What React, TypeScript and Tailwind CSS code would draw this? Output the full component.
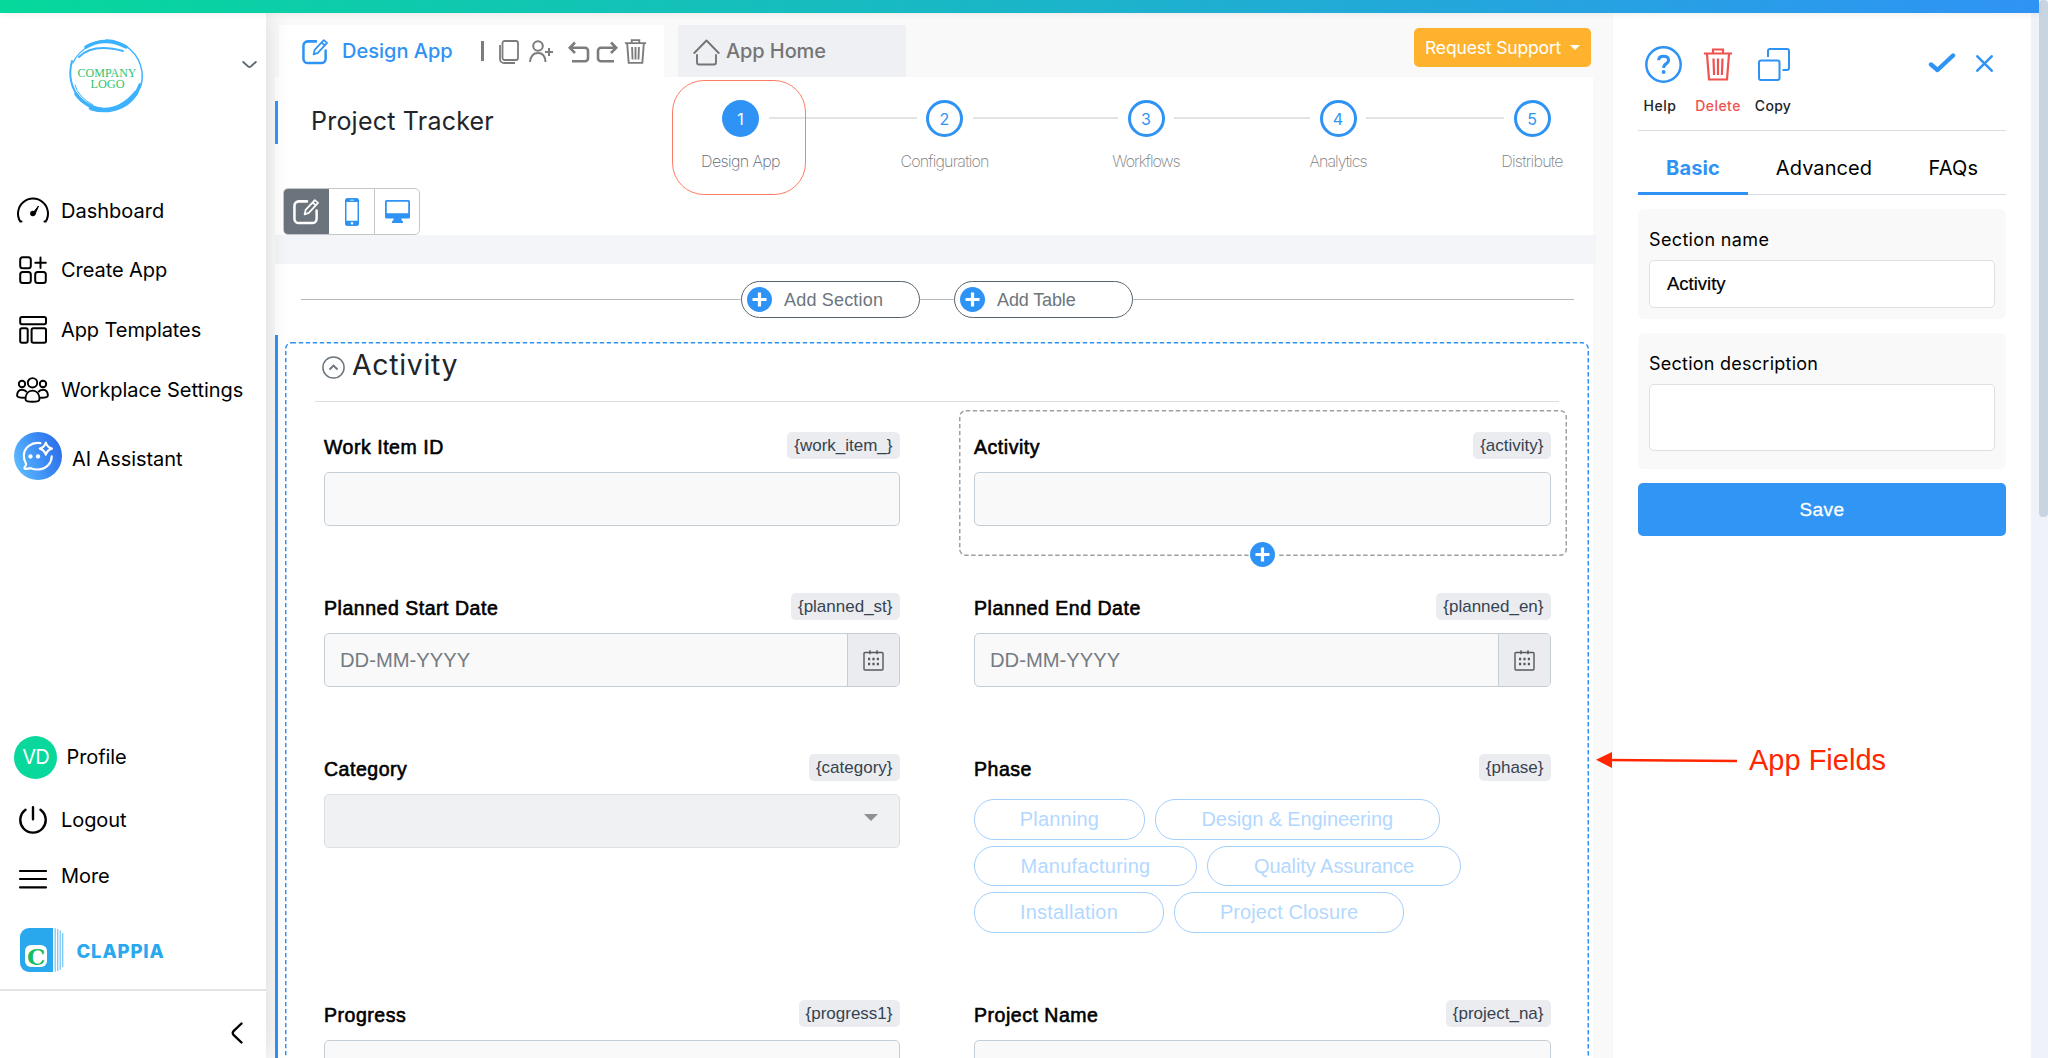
import type { ReactNode } from "react";

const INTER = "font-['Inter',sans-serif]";
const HELV = "font-['Liberation_Sans',sans-serif]";

function Pencil({ className }: { className: string }) {
  return (
    <svg className={className} viewBox="0 0 28 28" fill="none" stroke="currentColor" strokeLinecap="round" strokeLinejoin="round">
      <path d="M14.5 3.5H6a4.5 4.5 0 0 0-4.5 4.5v13.500a4.500 4.500 0 0 0 4.500 4.500h14a4.500 4.500 0 0 0 4.500-4.500V13" strokeWidth="2.6" />
      <path d="M12 17l1.100-4.600L22.600 2.200l3.400 2.900-9.600 10.300zM20.300 4.700l3.400 2.900" strokeWidth="1.8" />
    </svg>
  );
}

function Trash({ className, sw }: { className: string; sw: number }) {
  return (
    <svg className={className} viewBox="0 0 30 33" fill="none" stroke="currentColor" strokeWidth={sw}>
      <path d="M1 5.500h28M10 5V1.500h10V5M4 6l2 25.500h18L26 6M10.500 10.500l.6 16.500M15 10.500v16.500M19.500 10.500l-.6 16.500" />
    </svg>
  );
}

function PlusDot() {
  return (
    <svg className="size-[25px] shrink-0" viewBox="0 0 25 25">
      <circle cx="12.500" cy="12.500" r="12.500" fill="#2f93f5" />
      <path d="M12.500 5.500v14M5.500 12.500h14" stroke="#fff" strokeWidth="3.200" />
    </svg>
  );
}

function DashedFrame({ className, w, h }: { className: string; w: number; h: number }) {
  return (
    <svg className={"pointer-events-none absolute " + className} width={w} height={h} fill="none" stroke="currentColor">
      <rect x="0.750" y="0.750" width={w - 1.5} height={h - 1.5} rx="6" strokeWidth="1.500" strokeDasharray="4.400 2.600" />
    </svg>
  );
}

function NavItem({ icon, label, className }: { icon: ReactNode; label: string; className: string }) {
  return (
    <div className="flex h-[59.75px] items-center">
      <div className="flex w-[61px] justify-center pl-[4px]">{icon}</div>
      <span className={className}>{label}</span>
    </div>
  );
}

function Sidebar() {
  return (
    <aside className={"relative z-10 flex w-[266px] shrink-0 flex-col bg-white text-[20px] leading-[30px] text-black shadow-[0_0_24px_rgba(0,0,0,0.13)] " + INTER}>
      <div className="flex h-[167.500px] shrink-0 items-start justify-between pt-[26px] pr-[9px] pl-[69px]">
        <svg className="h-[75px] w-[74px] overflow-visible" viewBox="0 0 74 75">
          <g fill="none" stroke="#3db2ff" strokeLinecap="round">
            <path d="M37 1A36.500 36.500 0 0 1 73 33" strokeWidth="1.500" />
            <path d="M17 8Q36-3 57 8" strokeWidth="3.500" />
            <path d="M10 18Q24 4 54 12" strokeWidth="2" />
            <path d="M4 24Q8 14 20 7" strokeWidth="1.200" />
            <path d="M3 22Q-3 44 12 61" strokeWidth="2" />
            <path d="M7 55Q17 69 36 71Q62 71 71 46" strokeWidth="3.500" />
            <path d="M22 69Q48 77 67 54" strokeWidth="4.500" />
            <path d="M6 46Q9 58 24 66" strokeWidth="1" />
            <path d="M73 34Q74 42 71 48" strokeWidth="1.500" />
          </g>
          <text x="8.500" y="37.500" fontFamily="Liberation Serif, serif" fontSize="12.500" textLength="59" lengthAdjust="spacingAndGlyphs" fill="#2cc56f">COMPANY</text>
          <text x="21.500" y="48.800" fontFamily="Liberation Serif, serif" fontSize="12.500" textLength="34" lengthAdjust="spacingAndGlyphs" fill="#2cc56f">LOGO</text>
        </svg>
        <svg className="mt-[21px] h-[10px] w-[15px]" viewBox="0 0 15 10" fill="none" stroke="#5f6b76" strokeWidth="1.900" strokeLinecap="round">
          <path d="M1.200 2l5 4.500q1.300.9 2.600 0l5-4.500" />
        </svg>
      </div>

      <nav>
        <NavItem
          label="Dashboard"
          className="mt-[1px] tracking-[0px]"
          icon={
            <svg className="h-[26px] w-[34px]" viewBox="0 0 34 26" fill="none" stroke="#000" strokeWidth="2" strokeLinecap="round">
              <path d="M5.500 24.500H4.300A15 15 0 1 1 29.700 24.500H28.500" />
              <path d="M17.500 15.200l5-6.200-3.400 8z" fill="#000" strokeWidth="1" />
              <circle cx="16.800" cy="16.500" r="2.700" fill="#000" stroke="none" />
            </svg>
          }
        />
        <NavItem
          label="Create App"
          className="tracking-[-0.06px]"
          icon={
            <svg className="size-[28px]" viewBox="0 0 28 28" fill="none" stroke="#000" strokeWidth="2" strokeLinecap="round">
              <rect x="1.200" y="1.200" width="10.600" height="11" rx="2.500" />
              <rect x="1.200" y="16" width="10.600" height="11" rx="2.500" />
              <rect x="16.200" y="16" width="10.600" height="11" rx="2.500" />
              <path d="M21.500 1.500v10.500M16.300 6.700h10.500" />
            </svg>
          }
        />
        <NavItem
          label="App Templates"
          className="tracking-[-0.09px]"
          icon={
            <svg className="size-[28px]" viewBox="0 0 28 28" fill="none" stroke="#000" strokeWidth="2">
              <rect x="1.200" y="1" width="25.800" height="7.300" rx="1.800" />
              <rect x="1.200" y="12.200" width="7.500" height="14.600" rx="1.800" />
              <rect x="12.600" y="12.200" width="14.400" height="14.600" rx="1.800" />
            </svg>
          }
        />
        <NavItem
          label="Workplace Settings"
          className="tracking-[-0.05px]"
          icon={
            <svg className="h-[26px] w-[33px]" viewBox="0 0 33 26" fill="none" stroke="#000" strokeWidth="1.900" strokeLinejoin="round">
              <circle cx="16.500" cy="5.800" r="4.700" />
              <circle cx="6" cy="7" r="3.200" />
              <circle cx="27" cy="7" r="3.200" />
              <path d="M16.500 24.800c-5 0-7-1-7-2.600 0-5 2.500-8.600 7-8.600s7 3.600 7 8.600c0 1.600-2 2.600-7 2.600z" />
              <path d="M9.300 20.600c-5 .3-8.200-.2-8.200-1.800 0-3.800 1.700-6 4.700-6 2 0 3.800.6 5 2.300M23.700 20.600c5 .3 8.200-.2 8.200-1.800 0-3.800-1.700-6-4.700-6-2 0-3.800.6-5 2.300" />
            </svg>
          }
        />
      </nav>
      <div className="mt-[6px] flex h-[60px] shrink-0 items-center pl-[14px]">
        <svg className="size-[48px]" viewBox="0 0 49 49" fill="none">
          <defs>
            <linearGradient id="ai" x1="0" y1="0.700" x2="1" y2="0.300">
              <stop offset="0" stopColor="#5cbcff" />
              <stop offset="0.550" stopColor="#3d8df5" />
              <stop offset="1" stopColor="#2a6eea" />
            </linearGradient>
          </defs>
          <circle cx="24.500" cy="24.500" r="24.500" fill="url(#ai)" />
          <g stroke="#fff" strokeWidth="2.200" strokeLinejoin="round" strokeLinecap="round">
            <path d="M27 11.400C18 10 10 15.500 10 24.500c0 3.500 1.400 6 2.200 7.700.8 2-1.600 3.300-1.600 4.600 0 1.500 3.400.8 6.400.1 3 1.200 6 1.600 9 1.200 7.500-.9 12.500-6.600 12.500-13.300" />
            <path d="M32.500 10.800q1.400 5 6.200 6.200-4.800 1.400-6.200 6.200-1.400-4.800-6.200-6.200 4.800-1.200 6.200-6.200z" />
          </g>
          <circle cx="16.800" cy="25" r="2.200" fill="#fff" />
          <circle cx="24.500" cy="25" r="2.200" fill="#fff" />
        </svg>
        <span className="mt-[7px] ml-[10px] tracking-[-0.08px]">AI Assistant</span>
      </div>

      <div className="mt-auto flex h-[60px] shrink-0 items-center pl-[14px]">
        <div className="flex size-[43px] items-center justify-center rounded-full bg-[#08d89c] text-[20px] tracking-[-0.8px] text-white">VD</div>
        <span className="ml-[9.500px] tracking-[-0.09px]">Profile</span>
      </div>
      <div className="flex h-[62px] shrink-0 items-center pt-[3px] pl-[19px]">
        <svg className="size-[28px]" viewBox="0 0 28 28" fill="none" stroke="#000" strokeWidth="2.400" strokeLinecap="round">
          <path d="M6.500 3.700A12.700 12.700 0 1 0 21.500 3.700M14 1.300v12" />
        </svg>
        <span className="ml-[14px] tracking-[-0.08px]">Logout</span>
      </div>
      <div className="flex h-[54px] shrink-0 items-center pl-[19px]">
        <svg className="mt-[5px] h-[20px] w-[28px]" viewBox="0 0 28 20" fill="none" stroke="#000" strokeWidth="2.200" strokeLinecap="round">
          <path d="M1 2h26M1 10h26M1 18.300h26" />
        </svg>
        <span className="ml-[14px] tracking-[-0.09px]">More</span>
      </div>
      <div className="flex h-[86px] shrink-0 items-center pt-[7px] pl-[20px]">
        <svg className="h-[44px] w-[44px]" viewBox="0 0 44 44" fill="none">
          <path d="M9 0H33V44H9a9 9 0 0 1-9-9V9A9 9 0 0 1 9 0z" fill="#2aa8ee" />
          <path d="M35.200.2v43.600M37.700 1v42M40.200 2.200v39.600M42.700 5v34" stroke="#7cc8f5" strokeWidth="1.300" />
          <rect x="5" y="17" width="22" height="22" rx="6" fill="#fff" />
          <text x="7" y="36.500" fontFamily="DejaVu Serif, serif" fontWeight="700" fontSize="23" fill="#17bd63">C</text>
        </svg>
        <span className="mt-[2px] ml-[12.500px] text-[18.500px] font-extrabold tracking-[0.85px] text-[#2aa8ee]">CLAPPIA</span>
      </div>
      <div className="flex h-[69px] shrink-0 items-center justify-end border-t-2 border-[#e4e4e4] pt-[17px] pr-[23px]">
        <svg className="h-[22px] w-[12px]" viewBox="0 0 12 22" fill="none" stroke="#000" strokeWidth="2.400" strokeLinecap="round" strokeLinejoin="round">
          <path d="M10.500 1.500L2.500 9.200q-1.500 1.800 0 3.600l8 7.700" />
        </svg>
      </div>
    </aside>
  );
}

function TabsBar() {
  return (
    <div className={"flex h-[64px] shrink-0 items-end pl-[4px] text-[20px] leading-[30px] font-medium " + INTER}>
      <div className="flex h-[52px] w-[385px] items-center bg-white pl-[23px] text-[#7c7c7c]">
        <Pencil className="size-[27px] text-[#2f93f5]" />
        <span className="ml-[13px] w-[111px] text-[#2f93f5]">Design App</span>
        <span className="ml-[28px] h-[20px] w-[3px] bg-[#7c7c7c]" />
        <svg className="mt-[1px] ml-[15px] h-[24px] w-[20px]" viewBox="0 0 20 24" fill="none" stroke="currentColor" strokeWidth="1.800">
          <rect x="3.500" y="1" width="15.500" height="19" rx="2" />
          <path d="M1 5v14a4 4 0 0 0 4 4h11" />
        </svg>
        <svg className="ml-[10px] h-[23px] w-[25px]" viewBox="0 0 25 23" fill="none" stroke="currentColor" strokeWidth="2">
          <circle cx="9" cy="6" r="4.800" />
          <path d="M1 22q1-9 8-9t7.500 9M16 12h8M20 8v8" />
        </svg>
        <svg className="mt-[2px] ml-[14px] h-[22px] w-[22px]" viewBox="0 0 22 22" fill="none" stroke="currentColor" strokeWidth="2.600">
          <path d="M7 1.500L1.800 6.800 7 12M2 6.800h15a3 3 0 0 1 3 3v7.500a3 3 0 0 1-3 3H4" />
        </svg>
        <svg className="mt-[2px] ml-[6px] h-[22px] w-[22px]" viewBox="0 0 22 22" fill="none" stroke="currentColor" strokeWidth="2.600">
          <path d="M15 1.500l5.200 5.300L15 12M20 6.800H5a3 3 0 0 0-3 3v7.500a3 3 0 0 0 3 3h13" />
        </svg>
        <Trash className="ml-[6px] h-[25px] w-[23px]" sw={2.5} />
      </div>
      <div className="ml-[14px] flex h-[52px] w-[228px] items-center bg-[#eff0f3] pl-[15px] text-[#757575]">
        <svg className="mt-[3px] h-[27px] w-[27px]" viewBox="0 0 27 27" fill="none" stroke="currentColor" strokeWidth="1.900" strokeLinecap="round" strokeLinejoin="round">
          <path d="M1.300 14L13.500 1.500 25.700 14M4 16v7.500a2 2 0 0 0 2 2h15a2 2 0 0 0 2-2V16" />
        </svg>
        <span className="ml-[6px] tracking-[-0.1px]">App Home</span>
      </div>
      <div className="mt-[15px] mr-[22px] mb-auto ml-auto flex h-[39px] w-[177px] items-center rounded-[5px] bg-[#ffb22d] pl-[11px] text-[17.5px] font-normal tracking-[-0.15px] text-white">
        <span className="w-[145px]">Request Support</span>
        <span className="-mt-[1px] border-x-[5px] border-t-[5px] border-x-transparent border-t-white" />
      </div>
    </div>
  );
}

const STEPS = [
  { label: "Design App", gap: "w-[167px]", track: "tracking-[-0.63px]", tone: "text-[#5c6773]" },
  { label: "Configuration", gap: "w-[164.500px]", track: "tracking-[-0.81px]", tone: "text-[#7d7d7d]" },
  { label: "Workflows", gap: "w-[155px]", track: "tracking-[-1px]", tone: "text-[#7d7d7d]" },
  { label: "Analytics", gap: "w-[157px]", track: "tracking-[-0.97px]", tone: "text-[#7d7d7d]" },
  { label: "Distribute", gap: "", track: "tracking-[-0.74px]", tone: "text-[#7d7d7d]" },
];

function Header() {
  return (
    <div className={"mr-[20px] h-[158px] bg-white " + INTER}>
      <div className="flex h-[111px] pl-[36px]">
        <h1 className="w-[411px] pt-[26px] text-[25px] leading-[36px] tracking-[0.22px] text-[#212529]">Project Tracker</h1>
        <div className="relative flex pt-[23px]">
          {STEPS.map((s, i) => (
            <div key={s.label} className="flex">
              <div className="flex w-[37px] flex-col items-center">
                <div
                  className={
                    "flex size-[37px] items-center justify-center rounded-full text-[16px] " +
                    (i === 0 ? "bg-[#2f93f5] text-white" : "border-[3px] border-[#2f93f5] text-[#2f93f5]")
                  }
                >
                  {i + 1}
                </div>
                <span className={"mt-[12px] text-[16px] leading-[24px] font-extralight whitespace-nowrap " + s.track + " " + s.tone}>{s.label}</span>
              </div>
              {s.gap && (
                <div className={"px-[9.500px] pt-[17px] " + s.gap}>
                  <div className="h-[2px] bg-[#e4e4e4]" />
                </div>
              )}
            </div>
          ))}
          <div className="absolute top-[3px] -left-[50px] h-[115px] w-[134px] rounded-[32px] border border-[#ff7d68]" />
        </div>
      </div>
      <div className="ml-[8px] flex h-[47px] w-[137px] overflow-hidden rounded-[5px] border border-[#c4c7ca] text-[#2f93f5]">
        <div className="flex w-[45px] items-center justify-center bg-[#6b747d] text-white">
          <Pencil className="size-[27px]" />
        </div>
        <div className="flex w-[46px] items-center justify-center border-r border-[#c4c7ca]">
          <svg className="h-[28px] w-[14px]" viewBox="0 0 14 28">
            <path fill="currentColor" fillRule="evenodd" d="M2.500 0h9A2.500 2.500 0 0 1 14 2.500v23a2.500 2.500 0 0 1-2.500 2.500h-9A2.500 2.500 0 0 1 0 25.500v-23A2.500 2.500 0 0 1 2.500 0zM1.500 4v18.800h11V4zM5 1.700v.9h4v-.9zM7 24a1.300 1.300 0 1 0 .01 0z" />
          </svg>
        </div>
        <div className="flex w-[44px] items-center justify-center">
          <svg className="h-[23px] w-[25px]" viewBox="0 0 25 23">
            <path fill="currentColor" fillRule="evenodd" d="M1.500 0h22A1.500 1.500 0 0 1 25 1.500v15.500a1.500 1.500 0 0 1-1.500 1.500h-7.300q.2 2 1.800 3v1.500H7v-1.500q1.600-1 1.800-3H1.500A1.500 1.500 0 0 1 0 17V1.500A1.500 1.500 0 0 1 1.500 0zM1.800 1.800v11.400h21.400V1.800z" />
          </svg>
        </div>
      </div>
    </div>
  );
}

function AddButton({ label, className }: { label: string; className: string }) {
  return (
    <button className={"flex h-[37px] w-[179px] items-center rounded-[19px] border border-[#56636d] bg-white pl-[5px] text-[18px] text-[#6c757d] " + className}>
      <PlusDot />
      <span className="mt-[1px] ml-[12px]">{label}</span>
    </button>
  );
}

function FieldHead({ label, tag }: { label: string; tag: string }) {
  return (
    <div className="flex h-[27px] items-start justify-between">
      <span className="mt-[2px] text-[19.5px] leading-[27px] tracking-[0.53px] text-black [-webkit-text-stroke:0.6px_#000]">{label}</span>
      <span className="h-[27px] rounded-[5px] bg-[#ebecf0] pr-[7.500px] pl-[7px] text-[17px] leading-[28px] tracking-[0px] text-[#364350]">{tag}</span>
    </div>
  );
}

function TextField({ label, tag }: { label: string; tag: string }) {
  return (
    <div>
      <FieldHead label={label} tag={tag} />
      <div className="mt-[13px] h-[54px] rounded-[5px] border border-[#c5cdd5] bg-[#f9f9f9]" />
    </div>
  );
}

function DateField({ label, tag }: { label: string; tag: string }) {
  return (
    <div>
      <FieldHead label={label} tag={tag} />
      <div className="mt-[13px] flex h-[54px] overflow-hidden rounded-[5px] border border-[#c5cdd5] bg-[#f9f9f9]">
        <span className="flex-1 pl-[15px] text-[20.2px] leading-[52px] text-[#747c83]">DD-MM-YYYY</span>
        <div className="flex w-[52px] items-center justify-center border-l border-[#c5cdd5] bg-[#ebecf0]">
          <svg className="h-[21px] w-[21px]" viewBox="0 0 21 21" fill="none" stroke="#55585c" strokeWidth="1.400">
            <rect x="1" y="2.500" width="19" height="17.500" rx="1" />
            <path d="M7 .3v4M14 .3v4" />
            <path d="M5 9h2.200M9.400 9h2.200M13.800 9H16M5 14h2.200M9.400 14h2.200M13.800 14H16" strokeWidth="2.400" />
          </svg>
        </div>
      </div>
    </div>
  );
}

const PHASES = [
  { label: "Planning", cls: "w-[171px] tracking-[0.18px]" },
  { label: "Design & Engineering", cls: "w-[284.500px] mr-[100px] tracking-[-0.1px]" },
  { label: "Manufacturing", cls: "w-[223px] tracking-[0.25px]" },
  { label: "Quality Assurance", cls: "w-[254px] mr-[80px] tracking-[-0.07px]" },
  { label: "Installation", cls: "w-[190px] tracking-[0.2px]" },
  { label: "Project Closure", cls: "w-[230px] tracking-[0.1px]" },
];

function Canvas() {
  return (
    <div className={"mr-[20px] flex-1 bg-white " + HELV}>
      <div className="flex h-[71px] items-center pr-[19px] pl-[26px]">
        <div className="h-px flex-1 bg-[#b5b9bc]" />
        <AddButton label="Add Section" className="tracking-[0.19px]" />
        <div className="h-px w-[34px] bg-[#b5b9bc]" />
        <AddButton label="Add Table" className="tracking-[-0.13px]" />
        <div className="h-px w-[441px] bg-[#b5b9bc]" />
      </div>
      <div className="h-[730px] border-l-[3px] border-[#2f93f5] pt-[7px] pl-[7px]">
        <section className="relative h-[760px] pr-[30px] pl-[30px]">
          <DashedFrame className="top-0 left-0 text-[#2f93f5]" w={1304} h={760} />
          <div className="mr-[4px] flex h-[60px] items-start border-b border-[#dcdde0] pl-[7px]">
            <svg className="mt-[14px] size-[23px]" viewBox="0 0 23 23" fill="none" stroke="#6c757d">
              <circle cx="11.500" cy="11.500" r="10.600" strokeWidth="1.500" />
              <path d="M7.500 13.500l4-4 4 4" strokeWidth="1.900" />
            </svg>
            <h2 className={"ml-[7px] text-[28.5px] leading-[46px] tracking-[0.65px] text-[#212529] " + INTER}>Activity</h2>
          </div>
          <div className="grid grid-cols-[576px_577px] grid-rows-[161px_161px_246px_100px] gap-x-[74px] pt-[30px] pl-[9px]">
            <TextField label="Work Item ID" tag="{work_item_}" />
            <div className="relative">
              <TextField label="Activity" tag="{activity}" />
              <DashedFrame className="-top-[22px] -left-[15.500px] text-[#9d9fa1]" w={608} h={146} />
              <div className="absolute top-[110px] left-[274.500px] bg-white px-[1.500px]">
                <PlusDot />
              </div>
            </div>
            <DateField label="Planned Start Date" tag="{planned_st}" />
            <DateField label="Planned End Date" tag="{planned_en}" />
            <div>
              <FieldHead label="Category" tag="{category}" />
              <div className="mt-[13px] flex h-[54px] justify-end rounded-[5px] border border-[#dae0e4] bg-[#f0f1f3] pt-[19px] pr-[21px]">
                <span className="h-0 w-0 border-x-[7px] border-t-[7px] border-x-transparent border-t-[#8e9091]" />
              </div>
            </div>
            <div>
              <FieldHead label="Phase" tag="{phase}" />
              <div className="mt-[18px] flex flex-wrap gap-x-[10px] gap-y-[6px] text-[20px] text-[#b3d8ff]">
                {PHASES.map((p) => (
                  <span key={p.label} className={"h-[40.500px] rounded-[20px] border border-[#a3cffd] text-center leading-[39px] " + p.cls}>
                    {p.label}
                  </span>
                ))}
              </div>
            </div>
            <TextField label="Progress" tag="{progress1}" />
            <TextField label="Project Name" tag="{project_na}" />
          </div>
        </section>
      </div>
    </div>
  );
}

function Inspector() {
  return (
    <aside className={"flex w-[418px] shrink-0 flex-col bg-white px-[25px] text-black " + INTER}>
      <div className="flex h-[118px] items-start border-b border-[#dcdde0] text-[14px] leading-[20px] font-medium text-[#212529]">
        <div className="mt-[33px] flex w-[44px] flex-col items-center">
          <svg className="size-[37px] translate-x-[3px]" viewBox="0 0 37 37" fill="none">
            <circle cx="18.500" cy="18.500" r="17.200" stroke="#2f93f5" strokeWidth="2.500" />
            <path d="M13.600 14.300q.2-4 5-4t5 3.800q0 2.200-2.600 3.800-2.300 1.400-2.300 4" stroke="#2f93f5" strokeWidth="3" />
            <circle cx="18.600" cy="26" r="2" fill="#2f93f5" />
          </svg>
          <span className="mt-[13px] tracking-[0.6px]">Help</span>
        </div>
        <div className="mt-[33px] ml-[12px] flex w-[48px] flex-col items-center text-[#f0524f]">
          <div className="flex h-[37px] items-center">
            <Trash className="h-[33px] w-[30px]" sw={2.2} />
          </div>
          <span className="mt-[13px] tracking-[0.46px]">Delete</span>
        </div>
        <div className="mt-[33px] ml-[11px] flex w-[40px] flex-col items-center">
          <div className="flex h-[37px] items-center">
            <svg className="size-[33px]" viewBox="0 0 33 33" fill="none" stroke="#2f93f5" strokeWidth="2">
              <rect x="2" y="12.500" width="20.500" height="19.500" rx="2" />
              <path d="M11 9V3a2 2 0 0 1 2-2h17a2 2 0 0 1 2 2v17a2 2 0 0 1-2 2h-4.500" />
            </svg>
          </div>
          <span className="mt-[13px] tracking-[0.3px]">Copy</span>
        </div>
        <svg className="mt-[39px] ml-auto h-[22px] w-[28px]" viewBox="0 0 28 22" fill="none" stroke="#2f93f5" strokeWidth="4.400" strokeLinecap="round" strokeLinejoin="round">
          <path d="M3 12.500l6.500 5.500L25 3.500" />
        </svg>
        <svg className="mt-[42px] mr-[13px] ml-[20px] size-[17px]" viewBox="0 0 17 17" fill="none" stroke="#2f93f5" strokeWidth="2.500" strokeLinecap="round">
          <path d="M1.300 1.300l14.400 14.400M15.700 1.300L1.300 15.700" />
        </svg>
      </div>

      <div className="flex h-[64px] border-b border-[#d5dce3] text-[20px] leading-[30px]">
        <div className="-mb-px w-[110px] border-b-[3px] border-[#2f93f5] pt-[22px] text-center font-bold tracking-[0.13px] text-[#2f93f5]">Basic</div>
        <div className="w-[152px] pt-[22px] text-center tracking-[0.08px]">Advanced</div>
        <div className="flex-1 pt-[22px] pl-px text-center tracking-[0.2px]">FAQs</div>
      </div>

      <div className="mt-[14px] h-[110px] rounded-[6px] bg-[#f9f9f9] px-[11px] pt-[16px]">
        <label className="block text-[18px] leading-[30px] tracking-[0.35px]">Section name</label>
        <div className={"mt-[5px] h-[48px] rounded-[5px] border border-[#e0e0e0] bg-white pl-[17px] text-[18.5px] leading-[46px] [-webkit-text-stroke:0.2px_#000] " + HELV}>
          Activity
        </div>
      </div>
      <div className="mt-[14px] h-[136px] rounded-[6px] bg-[#f9f9f9] px-[11px] pt-[16px]">
        <label className="block text-[18px] leading-[30px] tracking-[0.25px]">Section description</label>
        <div className="mt-[5px] h-[67px] rounded-[5px] border border-[#e0e0e0] bg-white" />
      </div>
      <button className={"mt-[14px] h-[53px] rounded-[5px] bg-[#3195f5] text-[19px] leading-[54px] tracking-[0.42px] text-white [-webkit-text-stroke:0.3px_#fff] " + HELV}>Save</button>
    </aside>
  );
}

export default function App() {
  return (
    <div className="relative flex h-[1058px] w-[2048px] overflow-hidden bg-[#eff3f9]">
      <div className="flex w-[2039px] flex-col">
        <div className="relative z-20 h-[13px] shrink-0 bg-linear-to-r/srgb from-[#06d89b] to-[#2f93f5] shadow-[0_2px_6px_rgba(0,0,0,0.06)]" />
        <div className="flex min-h-0 flex-1">
          <Sidebar />
          <main className="flex w-[1347px] shrink-0 flex-col bg-[#f9f9f9] pl-[9px]">
            <TabsBar />
            <div className="flex shrink-0">
              <div className="relative z-10 mt-[24px] -mr-[3px] h-[43px] w-[3px] bg-[#2f93f5]" />
              <div className="flex-1">
                <Header />
              </div>
            </div>
            <div className="mr-[17px] h-[29px] shrink-0 bg-[#f4f5f9]" />
            <Canvas />
          </main>
          <Inspector />
        </div>
      </div>
      <div className="ml-auto h-[517px] w-[9px] rounded-[4px] bg-[#c9d4e1]" />

      <div className="absolute top-[740px] left-[1596px] flex items-center">
        <svg className="h-[18px] w-[142px]" viewBox="0 0 142 18">
          <path d="M12 9l129 1" stroke="#ff2600" strokeWidth="2.600" />
          <path d="M0 8.800L16 1v16z" fill="#ff2600" />
        </svg>
        <span className={"ml-[11px] text-[29px] leading-[40px] text-[#ff2600] " + HELV}>App Fields</span>
      </div>
    </div>
  );
}
